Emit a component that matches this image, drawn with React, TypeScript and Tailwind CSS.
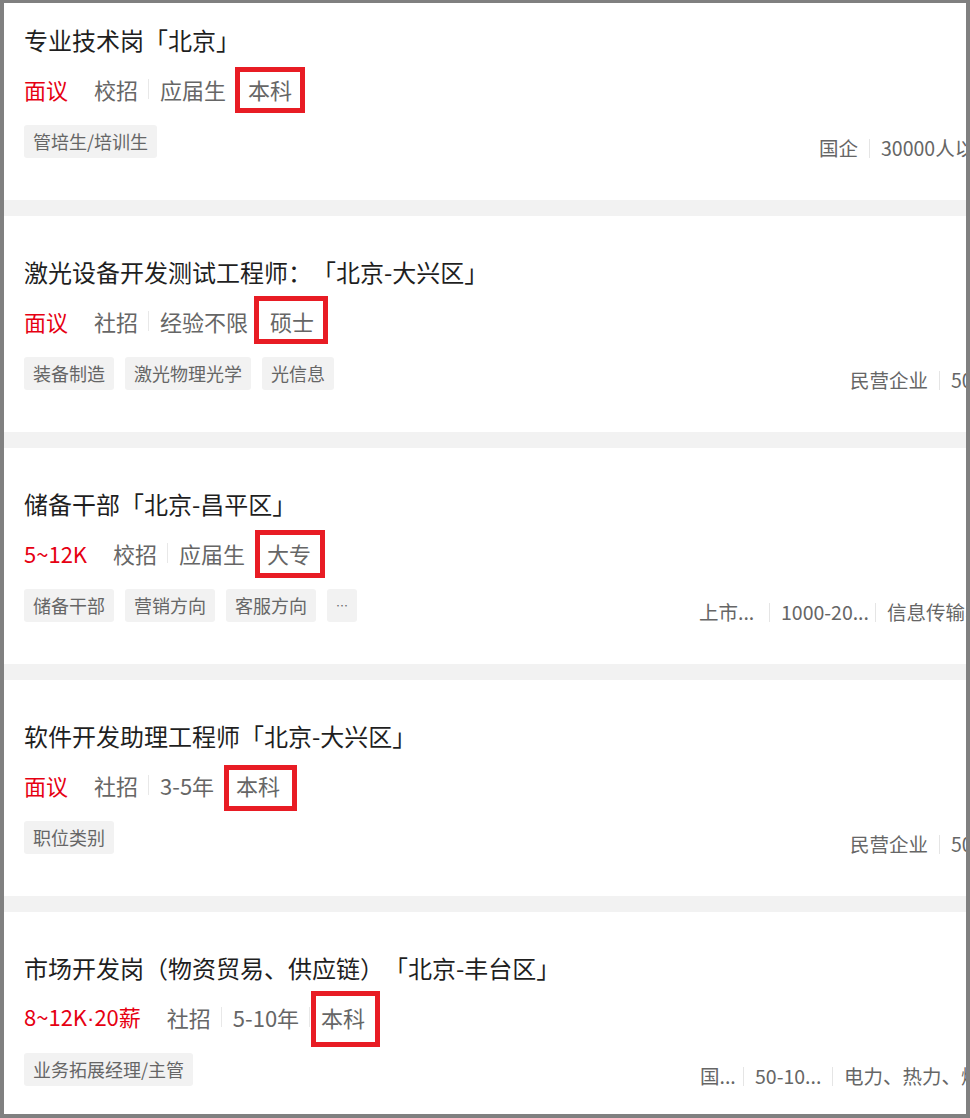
const JOBS = [
  {
    title: "专业技术岗「北京」",
    salary: ["面议"],
    meta: ["校招", "应届生"],
    degree: "本科",
    box: "-left-[13px] -right-[13px] -top-[7px] -bottom-[9px]",
    tags: ["管培生/培训生"],
    infoWidth: "w-[385px]",
    info: [{ text: "国企" }, { text: "30000人以上" }],
  },
  {
    title: "激光设备开发测试工程师：「北京-大兴区」",
    salary: ["面议"],
    meta: ["社招", "经验不限"],
    degree: "硕士",
    box: "-left-[16px] -right-[14px] -top-[10px] -bottom-[8px]",
    tags: ["装备制造", "激光物理光学", "光信息"],
    infoWidth: "w-[354px]",
    info: [{ text: "民营企业" }, { text: "500-999人" }],
  },
  {
    title: "储备干部「北京-昌平区」",
    salary: ["5~12K"],
    meta: ["校招", "应届生"],
    degree: "大专",
    box: "-left-[12px] -right-[14px] -top-[8px] -bottom-[10px]",
    tags: ["储备干部", "营销方向", "客服方向", "…"],
    infoWidth: "w-[505px]",
    info: [
      { text: "上市...", w: "w-[59px]" },
      { text: "1000-20...", w: "w-[83px]" },
      { text: "信息传输、软件和信息技术服务业" },
    ],
  },
  {
    title: "软件开发助理工程师「北京-大兴区」",
    salary: ["面议"],
    meta: ["社招", "3-5年"],
    degree: "本科",
    box: "-left-[12px] -right-[17px] -top-[5px] -bottom-[11px]",
    tags: ["职位类别"],
    infoWidth: "w-[354px]",
    info: [{ text: "民营企业" }, { text: "500-999人" }],
  },
  {
    title: "市场开发岗（物资贸易、供应链）「北京-丰台区」",
    salary: ["8~12K", "20薪"],
    meta: ["社招", "5-10年"],
    degree: "本科",
    box: "-left-[10px] -right-[15px] -top-[11px] -bottom-[15px]",
    tags: ["业务拓展经理/主管"],
    infoWidth: "w-[504px]",
    info: [
      { text: "国...", w: "w-[32px]" },
      { text: "50-10...", w: "w-[66px]" },
      { text: "电力、热力、燃气及水生产和供应业" },
    ],
  },
];

type Job = (typeof JOBS)[number];

function JobCard({ job }: { job: Job }) {
  return (
    <div className="h-[216px] w-[1200px] shrink-0 bg-white pl-[20px] pt-[38px]">
      <h3 className="text-[24px] leading-[36px] text-[#1f1f1f] whitespace-nowrap">{job.title}</h3>

      {/* salary · type · experience · degree */}
      <div className="mt-[16px] flex h-[30px] items-center text-[22px] leading-[30px] text-[#666] whitespace-nowrap">
        <span className="mr-[26px] text-[#e60012]">
          {job.salary[0]}
          {job.salary[1] && (
            <>
              <span className="font-['Liberation_Sans',sans-serif]">·</span>
              {job.salary[1]}
            </>
          )}
        </span>
        {job.meta.map((m) => (
          <div key={m} className="flex items-center">
            <span>{m}</span>
            <span className="ml-[10px] mr-[11px] h-[20px] w-px bg-[#e8e8e8]" />
          </div>
        ))}
        <span className="relative">
          {job.degree}
          {/* red annotation box */}
          <span className={`absolute ${job.box} border-[5px] border-[#e81c24]`} />
        </span>
      </div>

      <div className="mt-[21px] flex items-end">
        <div className="flex gap-[11px]">
          {job.tags.map((t) => (
            <span
              key={t}
              className={`h-[33px] rounded-[3px] bg-[#f2f2f2] px-[9px] leading-[33px] text-[#666] whitespace-nowrap ${
                t === "…" ? "text-[12px]" : "text-[18px]"
              }`}
            >
              {t}
            </span>
          ))}
        </div>

        {/* company info, runs past the visible edge */}
        <div className={`ml-auto flex ${job.infoWidth} items-center text-[19.5px] leading-[20px] text-[#666] whitespace-nowrap`}>
          {job.info.map((it, i) => (
            <div key={it.text} className="flex items-center">
              {i > 0 && <span className="ml-[11px] mr-[11px] h-[19px] w-px bg-[#e5e5e5]" />}
              <span className={`${it.w ?? ""} shrink-0`}>{it.text}</span>
            </div>
          ))}
        </div>
      </div>
    </div>
  );
}

export default function App() {
  return (
    <div
      className="h-[1118px] w-[970px] overflow-hidden border-t-[3px] border-r-4 border-b-4 border-l-4 border-[#808080] bg-[#f2f2f2] [text-spacing-trim:space-all]"
      style={{ fontFamily: '"Noto Sans CJK SC", "Noto Sans", sans-serif' }}
    >
      {/* list is scrolled a little: first card's top is above the frame */}
      <div className="-mt-[19px] flex flex-col gap-[16px]">
        {JOBS.map((job) => (
          <JobCard key={job.title} job={job} />
        ))}
      </div>
    </div>
  );
}
